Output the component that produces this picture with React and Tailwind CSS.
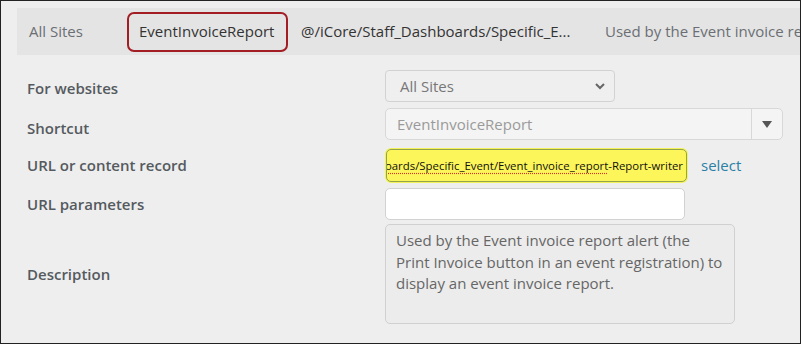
import React from "react";

const labelCls = "text-[15px] font-semibold text-[#555a60]";

export default function App() {
  return (
    <div
      className="w-[801px] h-[344px] overflow-hidden border border-[#222] bg-[#eeeeee] pt-[7px] pl-[16px]"
      style={{ fontFamily: '"Open Sans", sans-serif' }}
    >
      {/* list row */}
      <div className="h-[47px] bg-[#e4e4e4] flex items-center whitespace-nowrap text-[15px] overflow-hidden">
        <div className="shrink-0 w-[110px] pl-[12px] text-[#6b6f74]">All Sites</div>
        <div className="shrink-0 h-[40px] w-[161px] border-2 border-[#a31d25] rounded-[7px] flex items-center pl-[10px] text-[#333]">
          EventInvoiceReport
        </div>
        <div className="shrink-0 w-[317px] pl-[13px] text-[#333]">@/iCore/Staff_Dashboards/Specific_E...</div>
        <div className="shrink-0 text-[#6b6f74]">Used by the Event invoice report alert</div>
      </div>

      {/* form */}
      <div className="grid grid-cols-[358px_1fr] pl-[10px] pt-[15px] items-center">
        <div className={labelCls + " pt-[4px]"}>For websites</div>
        <div className="h-[32px] w-[230px] border border-[#d2d2d2] rounded-[4px] bg-[#efefef] flex items-center justify-between pl-[14px] pr-[8px] text-[15px] text-[#777]">
          <span>All Sites</span>
          <svg width="12" height="8" viewBox="0 0 12 8">
            <path d="M2 2 L6 6 L10 2" fill="none" stroke="#666" strokeWidth="2" />
          </svg>
        </div>

        <div className={labelCls + " mt-[7px] pt-[8px]"}>Shortcut</div>
        <div className="mt-[6px] h-[32px] w-[398px] border border-[#d8d8d8] rounded-[5px] bg-[#f4f4f4] flex items-center text-[15px] text-[#9a9a9a]">
          <span className="flex-1 pl-[11px]">EventInvoiceReport</span>
          <div className="h-full w-[31px] border-l border-[#d8d8d8] flex items-center justify-center">
            <svg width="10" height="7" viewBox="0 0 10 7">
              <path d="M0 0 L10 0 L5 7 Z" fill="#555" />
            </svg>
          </div>
        </div>

        <div className={labelCls + " mt-[8px]"}>URL or content record</div>
        <div className="mt-[8px] flex items-center">
          <div className="h-[35px] w-[303px] rounded-[6px] bg-[#f4f25a] p-[1px]">
            <div className="h-full w-full rounded-[5px] border border-[#93a548] bg-[#fdf65a] flex items-center justify-end overflow-hidden pr-[3px] whitespace-nowrap text-[11.4px] text-[#111]">
              <span>
                @/iCore/Staff_Dashb
                <span className="underline decoration-dotted decoration-[#e03030] underline-offset-[3px]">
                  oards/Specific_Event/Event_invoice_report
                </span>
                -Report-writer
              </span>
            </div>
          </div>
          <a className="ml-[13px] text-[15px] text-[#2b7fa6]">select</a>
        </div>

        <div className={labelCls + " mt-[6px]"}>URL parameters</div>
        <div className="mt-[5px] h-[32px] w-[300px] border border-[#d2d2d2] rounded-[5px] bg-white"></div>

        <div className={labelCls + " mt-[4px]"}>Description</div>
        <div className="mt-[4px] h-[100px] w-[350px] border border-[#d0d0d0] rounded-[5px] bg-[#ececec] px-[10px] pt-[5px] text-[15px] leading-[21.5px] text-[#666]">
          Used by the Event invoice report alert (the Print Invoice button in an event registration) to display an event invoice report.
        </div>
      </div>
    </div>
  );
}
